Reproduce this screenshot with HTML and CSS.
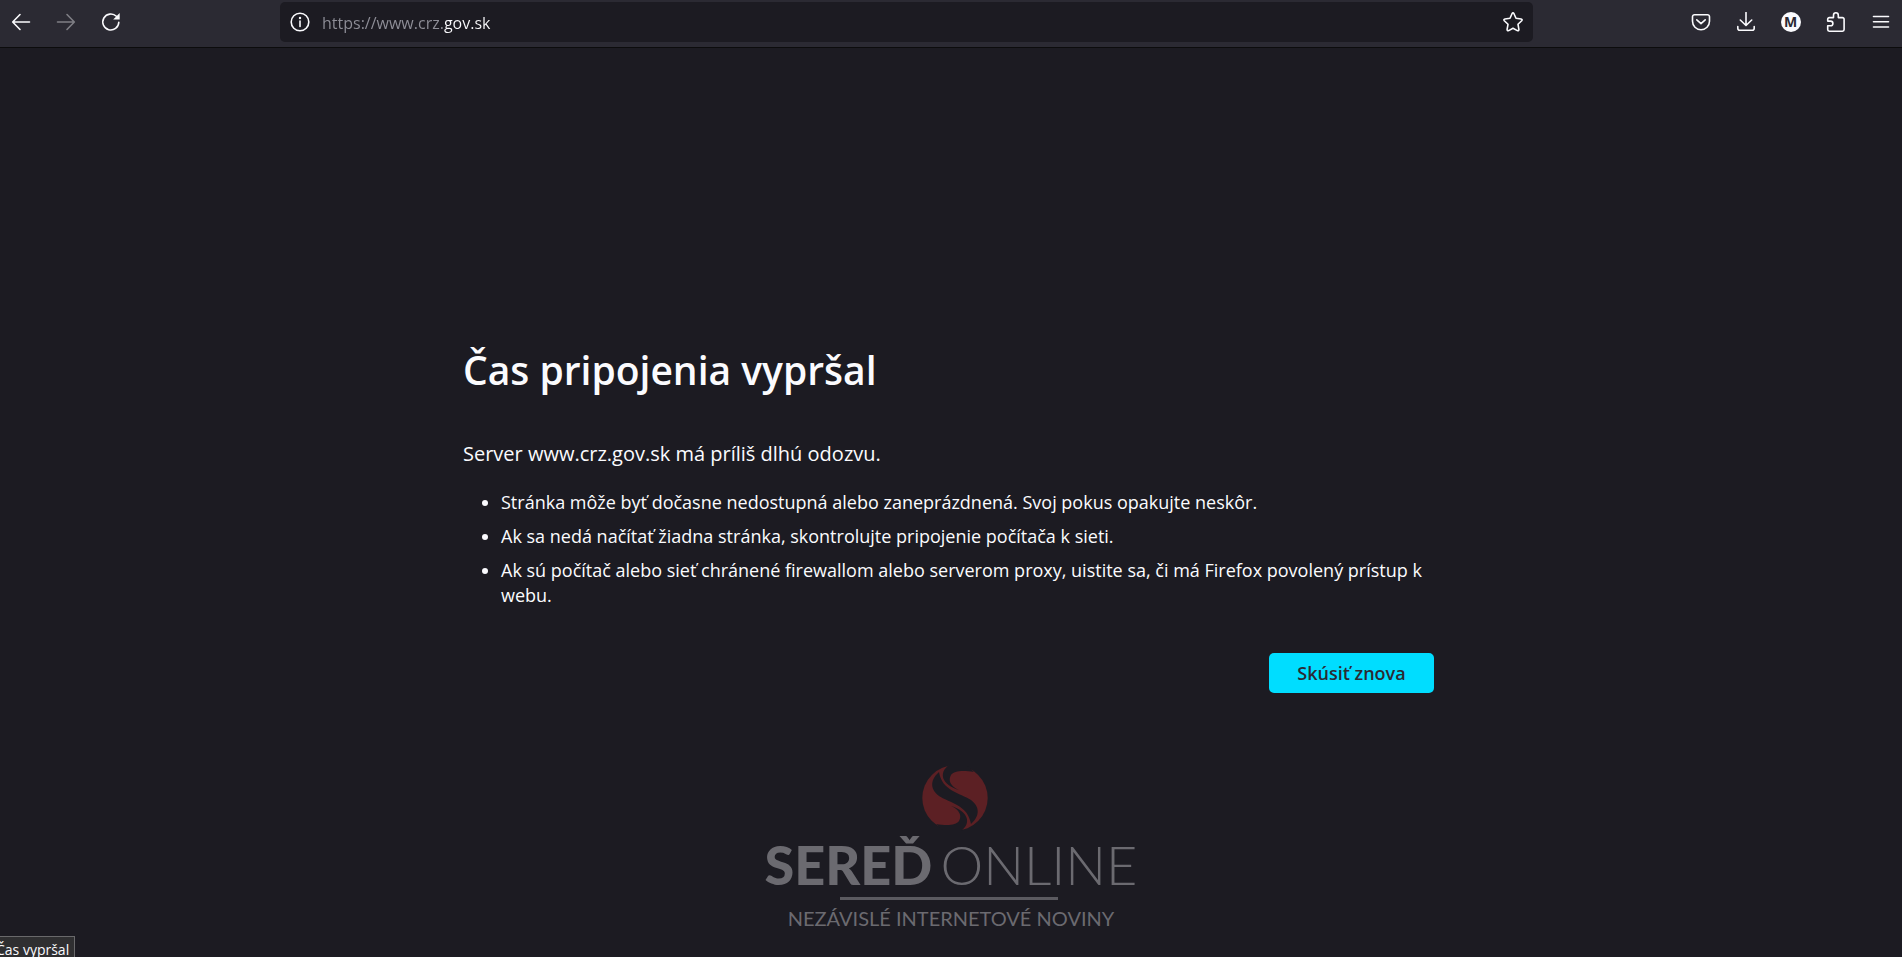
FILE: index.html
```html
<!DOCTYPE html>
<html lang="sk">
<head>
  <meta charset="UTF-8">
  <meta name="viewport" content="width=device-width, initial-scale=1.0">
  <title>Čas pripojenia vypršal</title>
  <link rel="stylesheet" href="styles.css">
</head>
<body>
  <header class="toolbar">
    <div class="nav-buttons">
      <button class="tool-btn" aria-label="Späť">
        <svg viewBox="0 0 20 20"><path d="M18.5 10H2M9 2.5 1.7 10 9 17.5"/></svg>
      </button>
      <button class="tool-btn" aria-label="Dopredu" disabled>
        <svg viewBox="0 0 20 20"><path d="M1.5 10H18M11 2.5 18.3 10 11 17.5"/></svg>
      </button>
      <button class="tool-btn" aria-label="Obnoviť">
        <svg viewBox="0 0 20 20"><path d="M17.8 10.2A8 8 0 1 1 15.4 4.3"/><path class="solid" d="M18.7 1v6.5h-6.5z"/></svg>
      </button>
    </div>

    <div class="urlbar">
      <svg class="icon" viewBox="0 0 20 20"><circle cx="10" cy="10" r="8.8"/><path d="M10 9v5.5"/><circle class="solid" cx="10" cy="6" r="1.2"/></svg>
      <input class="url" type="text" aria-label="Adresa" value="https://www.crz.gov.sk">
      <button class="star-btn" aria-label="Pridať záložku">
        <svg class="icon" viewBox="0 0 20 20"><path d="M9 1.7q1-1.6 2 0L13 6.3l5.1.7q1.6.4.6 1.7L15 12.3l.9 5.1q0 1.8-1.6 1.2L10 16.2l-4.3 2.4q-1.6.6-1.6-1.2L5 12.3 1.3 8.7Q.3 7.4 1.9 7L7 6.3z"/></svg>
      </button>
    </div>

    <div class="menu-buttons">
      <button class="tool-btn" aria-label="Pocket">
        <svg viewBox="0 0 20 20"><path d="M3.5 2.7h13a2 2 0 0 1 2 2v4.6a8.5 8.5 0 0 1-17 0V4.7a2 2 0 0 1 2-2z"/><path d="M5.8 7.8 10 11.6l4.2-3.8"/></svg>
      </button>
      <button class="tool-btn" aria-label="Stiahnuté súbory">
        <svg viewBox="0 0 20 20"><path d="M10 .5v12.7M4.3 8l5.7 5.5L15.7 8M1.8 14.5v1.7a2 2 0 0 0 2 2h12.4a2 2 0 0 0 2-2v-1.7"/></svg>
      </button>
      <button class="tool-btn" aria-label="Účet"><span class="account">M</span></button>
      <button class="tool-btn" aria-label="Rozšírenia">
        <svg viewBox="0 0 20 20"><path d="M3.3 19.2a1.6 1.6 0 0 1-1.6-1.6v-3.9h2.9a2.3 2.3 0 0 0 0-4.6H1.7V7.2a1.6 1.6 0 0 1 1.6-1.6h4.2V3.2a2.4 2.4 0 0 1 4.8 0v2.4h4.2a1.6 1.6 0 0 1 1.6 1.6v10.4a1.6 1.6 0 0 1-1.6 1.6z"/></svg>
      </button>
      <button class="tool-btn" aria-label="Ponuka">
        <svg viewBox="0 0 20 20"><path d="M2.5 4.5h15M2.5 9.8h15M2.5 15h15"/></svg>
      </button>
    </div>
  </header>

  <main class="error-page">
    <h1>Čas pripojenia vypršal</h1>
    <p class="short-desc">Server www.crz.gov.sk má príliš dlhú odozvu.</p>
    <ul>
      <li>Stránka môže byť dočasne nedostupná alebo zaneprázdnená. Svoj pokus opakujte neskôr.</li>
      <li>Ak sa nedá načítať žiadna stránka, skontrolujte pripojenie počítača k sieti.</li>
      <li>Ak sú počítač alebo sieť chránené firewallom alebo serverom proxy, uistite sa, či má Firefox povolený prístup k webu.</li>
    </ul>
    <button class="try-again">Skúsiť znova</button>
  </main>

  <footer class="watermark">
    <svg class="emblem" viewBox="0 0 66 66">
      <circle cx="33" cy="33" r="32.7"/>
      <g class="cut">
        <path d="M17 7C7 16 9 25 17 31C28 38 46 40 49 59C59 50 57 41 49 35C38 28 20 26 17 7z"/>
        <path d="M27 0C16 8 20 20 37 25C28 21 26 15 29 10C32 6 40 5 52 7L44 0z"/>
        <path d="M39 66C50 58 46 46 29 41C38 45 40 51 37 56C34 60 26 61 14 59L22 66z"/>
      </g>
    </svg>
    <div class="brand"><strong>SEREĎ</strong><span>ONLINE</span></div>
    <div class="rule"></div>
    <div class="tagline">NEZÁVISLÉ INTERNETOVÉ NOVINY</div>
  </footer>

  <div class="status-panel"><span>Čas vypršal</span></div>
</body>
</html>
```
FILE: styles.css
```css
:root {
  --toolbar: #2b2a33;
  --page: #1c1b22;
  --text: #fbfbfe;
  --accent: #00ddff;
}

* {
  box-sizing: border-box;
}

body {
  margin: 0;
  min-height: 100vh;
  display: flex;
  flex-direction: column;
  position: relative;
  overflow: hidden;
  background: var(--page);
  color: var(--text);
  font-family: "Open Sans", "Noto Sans", sans-serif;
}

button {
  border: none;
  padding: 0;
  background: none;
  color: inherit;
  font-family: inherit;
  cursor: pointer;
}

svg {
  width: 20px;
  height: 20px;
  fill: none;
  stroke: currentColor;
  stroke-width: 1.6;
  stroke-linecap: round;
  stroke-linejoin: round;
}

.solid {
  fill: currentColor;
  stroke-width: 0;
}

/* toolbar */
.toolbar {
  display: flex;
  height: 48px;
  padding-bottom: 3px;
  background: var(--toolbar);
  border-bottom: 1px solid #0c0c0d;
}

.nav-buttons,
.menu-buttons {
  display: flex;
  flex: none;
  width: 282px;
  margin-left: -2px;
}

.menu-buttons {
  width: 370px;
  margin: 0 -1px 0 0;
  justify-content: flex-end;
}

.tool-btn {
  width: 45px;
  display: flex;
  align-items: center;
  justify-content: center;
}

.tool-btn:disabled {
  opacity: 0.4;
}

.urlbar {
  flex: 1;
  display: flex;
  align-items: center;
  height: 40px;
  margin-top: 2px;
  padding: 0 10px;
  background: var(--page);
  border-radius: 5px;
}

.url {
  flex: 1;
  min-width: 0;
  margin: 2px 12px 0;
  padding: 0;
  border: none;
  outline: none;
  font-family: inherit;
  font-size: 16px;
  color: transparent;
  /* grey up to the base domain */
  background: linear-gradient(90deg, #8f8f98 122px, var(--text) 122px);
  -webkit-background-clip: text;
  background-clip: text;
}

.star-btn,
.star-btn svg {
  display: block;
}

.account {
  width: 20px;
  height: 20px;
  border-radius: 50%;
  background: var(--text);
  color: var(--toolbar);
  font-size: 14px;
  font-weight: 700;
  line-height: 20px;
}

/* error text */
.error-page {
  width: 976px;
  max-width: 100%;
  margin: 290px auto 0;
  padding-right: 5px;
  display: flex;
  flex-direction: column;
}

h1 {
  margin: 0;
  font-size: 39px;
  line-height: 64px;
  font-weight: 600;
}

.short-desc {
  margin: 36px 0 0;
  font-size: 20px;
  line-height: 32px;
}

ul {
  margin: 20px 0 0;
  padding-left: 38px;
  font-size: 18px;
  line-height: 25px;
}

li {
  margin-bottom: 9px;
}

.try-again {
  align-self: flex-end;
  width: 165px;
  height: 40px;
  margin-top: 36px;
  border-radius: 5px;
  background: var(--accent);
  color: var(--toolbar);
  font-size: 18px;
  font-weight: 600;
}

/* newspaper logo */
.watermark {
  display: flex;
  flex-direction: column;
  align-items: center;
  margin-top: 72px;
  color: #6b6a70;
  font-family: Lato, sans-serif;
}

.emblem {
  width: 66px;
  height: 66px;
  margin-left: 8px;
  fill: #5c2024;
  stroke: none;
}

.cut {
  fill: var(--page);
}

.brand {
  display: flex;
  gap: 8px;
  margin-top: 2px;
  font-size: 54px;
  line-height: 64px;
}

.brand strong {
  font-weight: 900;
}

.brand span {
  font-weight: 300;
}

.rule {
  width: 218px;
  height: 3px;
  margin-right: 4px;
  background: #5b5a60;
}

.tagline {
  margin-top: 4px;
  font-size: 20px;
  line-height: 28px;
}

/* hint in the window corner */
.status-panel {
  position: absolute;
  left: 0;
  bottom: 0;
  height: 21px;
  padding-right: 5px;
  background: #2f2f31;
  border: 1px solid #69696b;
  border-width: 1px 1px 0 0;
  font-size: 14px;
  line-height: 26px;
}

.status-panel span {
  margin-left: -4px;
}
```
